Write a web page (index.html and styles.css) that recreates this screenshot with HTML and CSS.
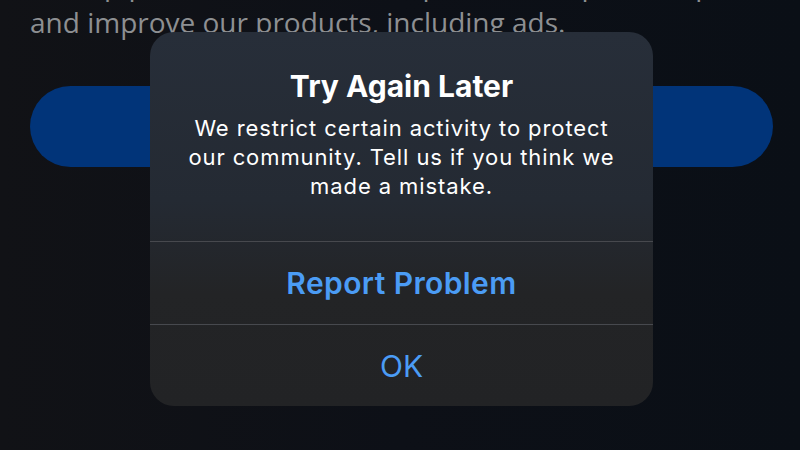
FILE: index.html
```html
<!DOCTYPE html>
<html lang="en">
<head>
<meta charset="utf-8">
<title>Try Again Later</title>
<link rel="stylesheet" href="styles.css">
</head>
<body>
<main class="page">
  <p class="bg-text">to help personalize, measure, protect and provide, p and improve our products, including ads.</p>
  <div class="bg-button"></div>
</main>
<div class="alert" role="alertdialog">
  <div class="alert-content">
    <h1 class="alert-title">Try Again Later</h1>
    <p class="alert-body">We restrict certain activity to protect our community. Tell us if you think we made a mistake.</p>
  </div>
  <button class="alert-action primary">Report Problem</button>
  <button class="alert-action">OK</button>
</div>
</body>
</html>
```
FILE: styles.css
```css
html, body {
  margin: 0;
  padding: 0;
  width: 800px;
  height: 450px;
  overflow: hidden;
}
body {
  background: linear-gradient(90deg, #111216 0%, #0d1017 50%, #0a0f16 100%);
  position: relative;
  font-family: Inter, "Noto Sans", sans-serif;
}
.page {
  padding: 0 27px 0 30px;
}
.bg-text {
  margin: -35px 0 0 0;
  font-family: "Open Sans", sans-serif;
  font-size: 28px;
  line-height: 38px;
  color: #8d8f92;
  width: 700px;
}
.bg-button {
  margin-top: 45px;
  height: 81px;
  border-radius: 41px;
  background: #013479;
}
.alert {
  position: absolute;
  left: 150px;
  top: 32px;
  width: 503px;
  height: 374px;
  border-radius: 24px;
  overflow: hidden;
  background: linear-gradient(180deg, #272e39 0%, #242a33 45%, #232426 70%, #222325 100%);
  display: flex;
  flex-direction: column;
}
.alert-content {
  padding: 36px 28px 0;
  height: 209px;
  box-sizing: border-box;
  text-align: center;
  color: #fff;
}
.alert-title {
  margin: 0;
  font-size: 30px;
  line-height: 36px;
  font-weight: 700;
  letter-spacing: 0;
}
.alert-body {
  margin: 9.5px 0 0;
  font-size: 22px;
  line-height: 29px;
  font-weight: 400;
  letter-spacing: 0.9px;
}
.alert-action {
  flex: 0 0 83px;
  border: 0;
  border-top: 1px solid #47494e;
  background: transparent;
  color: #4b9cf5;
  font-family: Inter, "Noto Sans", sans-serif;
  font-size: 30px;
  font-weight: 400;
  padding: 0;
  margin: 0;
  cursor: pointer;
}
.alert-action:last-child {
  flex-basis: 82px;
}
.alert-action.primary {
  font-weight: 600;
  letter-spacing: 0.4px;
}
```
